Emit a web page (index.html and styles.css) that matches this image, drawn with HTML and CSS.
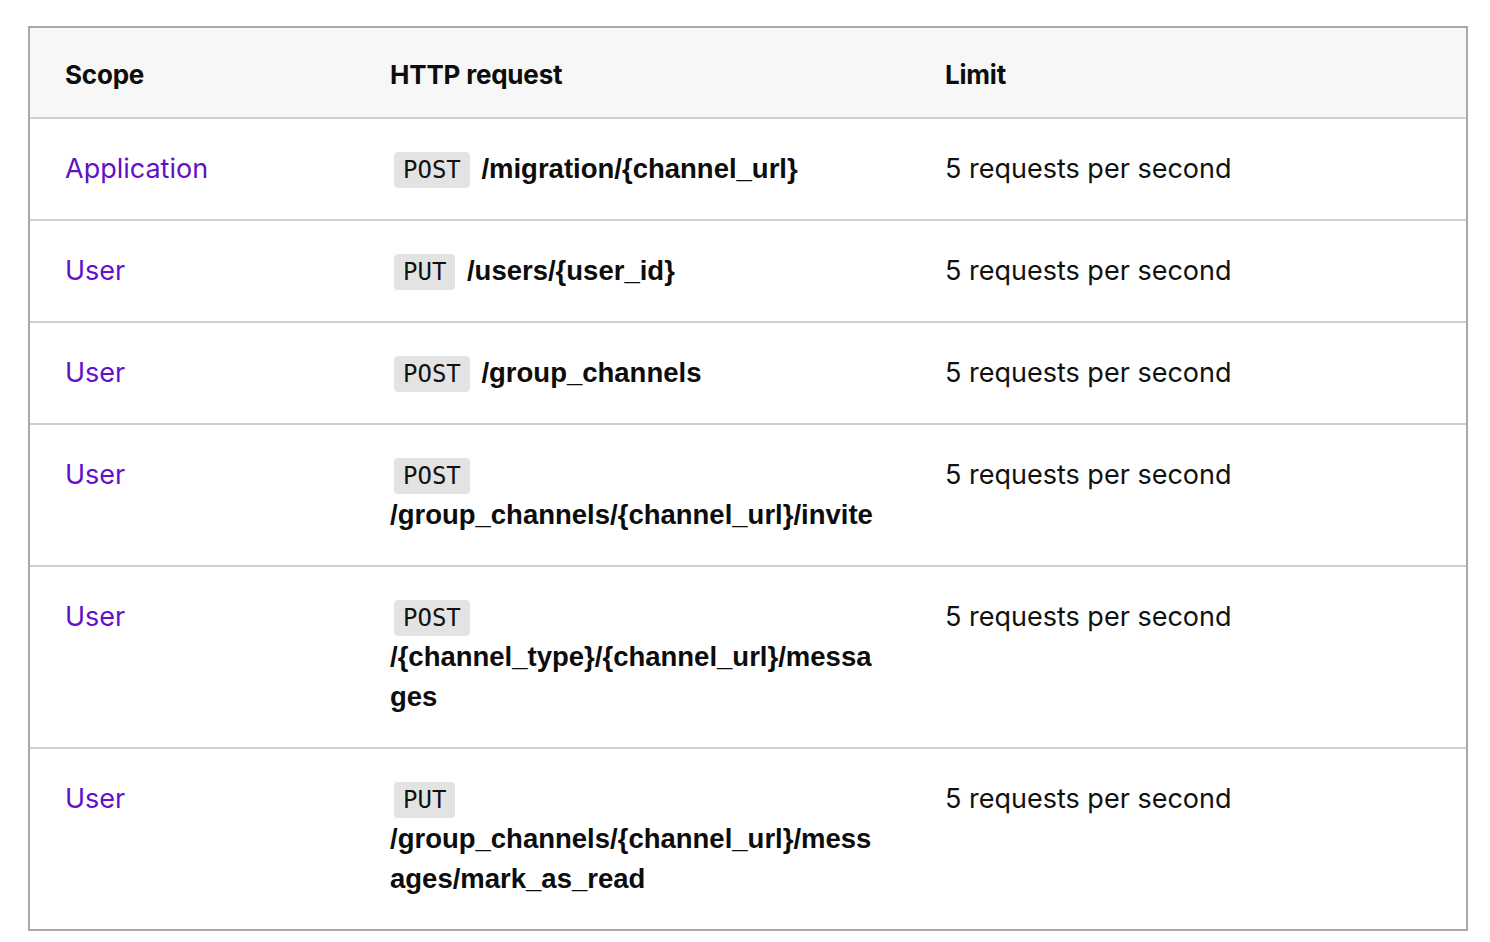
FILE: index.html
```html
<!DOCTYPE html>
<html lang="en">
<head>
<meta charset="utf-8">
<title>Rate limits</title>
<link rel="stylesheet" href="styles.css">
</head>
<body>
<div class="page">
  <table class="limits">
    <colgroup>
      <col class="c-scope">
      <col class="c-req">
      <col class="c-limit">
    </colgroup>
    <thead>
      <tr>
        <th>Scope</th>
        <th>HTTP request</th>
        <th>Limit</th>
      </tr>
    </thead>
    <tbody>
      <tr>
        <td class="scope">Application</td>
        <td class="req"><code class="method">POST</code> <strong class="path">/migration/{channel_url}</strong></td>
        <td class="limit">5 requests per second</td>
      </tr>
      <tr>
        <td class="scope">User</td>
        <td class="req"><code class="method">PUT</code> <strong class="path">/users/{user_id}</strong></td>
        <td class="limit">5 requests per second</td>
      </tr>
      <tr>
        <td class="scope">User</td>
        <td class="req"><code class="method">POST</code> <strong class="path">/group_channels</strong></td>
        <td class="limit">5 requests per second</td>
      </tr>
      <tr>
        <td class="scope">User</td>
        <td class="req"><code class="method">POST</code> <strong class="path">/group_channels/{channel_url}/invite</strong></td>
        <td class="limit">5 requests per second</td>
      </tr>
      <tr>
        <td class="scope">User</td>
        <td class="req"><code class="method">POST</code> <strong class="path">/{channel_type}/{channel_url}/messages</strong></td>
        <td class="limit">5 requests per second</td>
      </tr>
      <tr>
        <td class="scope">User</td>
        <td class="req"><code class="method">PUT</code> <strong class="path">/group_channels/{channel_url}/messages/mark_as_read</strong></td>
        <td class="limit">5 requests per second</td>
      </tr>
    </tbody>
  </table>
</div>
</body>
</html>
```
FILE: styles.css
```css
html, body {
  margin: 0;
  padding: 0;
  background: #ffffff;
}

.page {
  padding: 26px 0 0 28px;
}

.limits {
  width: 1440px;
  table-layout: fixed;
  border-collapse: separate;
  border-spacing: 0;
  border: 2px solid #a9a9a9;
  font-family: "Inter", "Liberation Sans", sans-serif;
  color: #0d0d0d;
}

.c-scope { width: 325px; }
.c-req { width: 555px; }

.limits th {
  background: #f7f7f7;
  text-align: left;
  font-weight: 700;
  font-size: 26px;
  line-height: 40px;
  padding: 27px 30px 22px 35px;
  letter-spacing: -0.2px;
}

.limits td {
  border-top: 2px solid #cfcfcf;
  vertical-align: top;
  font-size: 27px;
  line-height: 40px;
  padding: 30px 30px 30px 35px;
}

.scope {
  color: #6210cc;
}

.req {
  overflow-wrap: break-word;
}

.method {
  display: inline-block;
  font-family: "DejaVu Sans Mono", "Liberation Mono", monospace;
  font-size: 24px;
  line-height: 28px;
  padding: 4px 9px;
  margin: 0 4px;
  background: #e3e3e3;
  border-radius: 4px;
  color: #111;
}

.path {
  font-family: "Liberation Sans", Arial, sans-serif;
  font-weight: 700;
  font-size: 27.5px;
  color: #0d0d0d;
}

.limit {
  color: #111;
}
```
